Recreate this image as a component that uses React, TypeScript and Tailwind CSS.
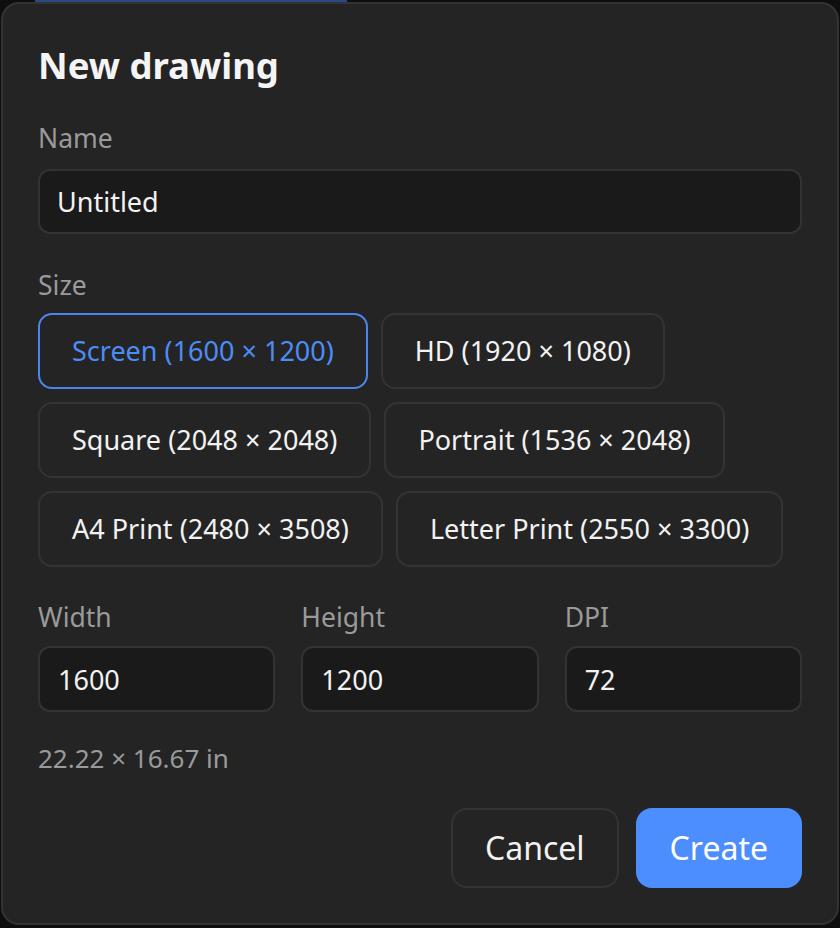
import React, { useState } from 'react';

interface Preset {
  id: string;
  label: string;
  w: number;
  h: number;
}

const presets: Preset[] = [
  { id: 'screen', label: 'Screen', w: 1600, h: 1200 },
  { id: 'hd', label: 'HD', w: 1920, h: 1080 },
  { id: 'square', label: 'Square', w: 2048, h: 2048 },
  { id: 'portrait', label: 'Portrait', w: 1536, h: 2048 },
  { id: 'a4', label: 'A4 Print', w: 2480, h: 3508 },
  { id: 'letter', label: 'Letter Print', w: 2550, h: 3300 },
];

const Field: React.FC<{ label: string; value: string; onChange: (v: string) => void }> = ({
  label,
  value,
  onChange,
}) => (
  <div className="flex flex-col min-w-0">
    <label className="mb-[11px] text-[26.5px] leading-[36px] text-[#9a9a9a]">{label}</label>
    <input
      value={value}
      onChange={(e) => onChange(e.target.value)}
      className="h-[66px] w-full rounded-[12px] border-2 border-[#333333] bg-[#1a1a1a] pl-[18px] text-[27px] text-[#f2f2f2] outline-none"
    />
  </div>
);

export default function App() {
  const [name, setName] = useState('Untitled');
  const [selected, setSelected] = useState('screen');
  const [width, setWidth] = useState('1600');
  const [height, setHeight] = useState('1200');
  const [dpi, setDpi] = useState('72');

  const pick = (p: Preset) => {
    setSelected(p.id);
    setWidth(String(p.w));
    setHeight(String(p.h));
  };

  const d = Number(dpi) || 1;
  const inches = `${(Number(width) / d).toFixed(2)} × ${(Number(height) / d).toFixed(2)} in`;

  return (
    <div className="min-h-screen bg-[#0e0e0e] font-['Noto_Sans',sans-serif]">
      <div className="ml-[35px] h-[2px] w-[312px] bg-[#2a4a85]" />
      <div className="ml-[1px] w-[838px] rounded-[18px] border-2 border-[#333333] bg-[#242424] px-[35px] pt-[37px] pb-[35px]">
        <h1 className="text-[36.5px] leading-[48px] font-bold text-[#f4f4f4]">New drawing</h1>

        {/* Name */}
        <div className="mt-[31px] flex flex-col">
          <label className="mb-[13px] text-[26.5px] leading-[36px] text-[#9a9a9a]">Name</label>
          <input
            value={name}
            onChange={(e) => setName(e.target.value)}
            className="h-[65px] w-full rounded-[12px] border-2 border-[#333333] bg-[#1a1a1a] pl-[17px] text-[27px] text-[#f2f2f2] outline-none"
          />
        </div>

        {/* Size presets */}
        <div className="mt-[33px]">
          <div className="mb-[10px] text-[26.5px] leading-[36px] text-[#9a9a9a]">Size</div>
          <div className="flex flex-wrap gap-x-[13px] gap-y-[13px]">
            {presets.map((p) => {
              const active = p.id === selected;
              return (
                <button
                  key={p.id}
                  onClick={() => pick(p)}
                  className={`h-[76px] rounded-[14px] border-2 bg-[#242424] px-[32px] text-[27px] ${
                    active ? 'border-[#4a86ee] text-[#4d8cf5]' : 'border-[#333333] text-[#f2f2f2]'
                  }`}
                >
                  {p.label} ({p.w} × {p.h})
                </button>
              );
            })}
          </div>
        </div>

        {/* Dimensions */}
        <div className="mt-[32px] grid grid-cols-3 gap-x-[26px]">
          <Field label="Width" value={width} onChange={setWidth} />
          <Field label="Height" value={height} onChange={setHeight} />
          <Field label="DPI" value={dpi} onChange={setDpi} />
        </div>

        <div className="mt-[28px] text-[26px] leading-[36px] text-[#9a9a9a]">{inches}</div>

        {/* Actions */}
        <div className="mt-[32px] flex justify-end gap-[17px]">
          <button className="h-[80px] rounded-[16px] border-2 border-[#333333] bg-[#242424] px-[32px] text-[32px] text-[#f2f2f2]">
            Cancel
          </button>
          <button className="h-[80px] rounded-[16px] bg-[#4d8eff] px-[34px] text-[32px] text-white">
            Create
          </button>
        </div>
      </div>
    </div>
  );
}
